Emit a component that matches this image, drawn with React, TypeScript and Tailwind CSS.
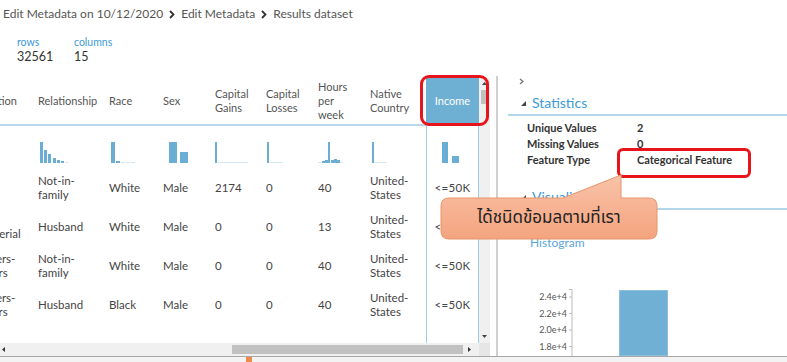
import React from 'react'

interface Col {
    key: string
    w: string
    left: number
    head: string[]
}

const cols: Col[] = [
    { key: 'occ', w: 'w-[38px]', left: 0, head: ['Occupation'] },
    { key: 'rel', w: 'w-[71px]', left: 38, head: ['Relationship'] },
    { key: 'race', w: 'w-[54px]', left: 109, head: ['Race'] },
    { key: 'sex', w: 'w-[52px]', left: 163, head: ['Sex'] },
    { key: 'gains', w: 'w-[51px]', left: 215, head: ['Capital', 'Gains'] },
    { key: 'loss', w: 'w-[52px]', left: 266, head: ['Capital', 'Losses'] },
    { key: 'hours', w: 'w-[52px]', left: 318, head: ['Hours', 'per', 'week'] },
    { key: 'native', w: 'w-[56px]', left: 370, head: ['Native', 'Country'] },
]

// [x, width, height] in page coordinates
const bars: Record<string, number[][]> = {
    occ: [],
    rel: [
        [40, 3, 21],
        [44, 3, 13],
        [48, 3, 9],
        [53, 3, 5],
        [57, 3, 3],
        [61, 3, 2],
        [65, 3, 1],
    ],
    race: [
        [111, 4, 21],
        [116, 4, 2],
        [121, 4, 1],
        [126, 4, 1],
        [131, 4, 1],
    ],
    sex: [
        [169, 8, 21],
        [180, 8, 11],
    ],
    gains: [
        [215, 2, 21],
        [218, 30, 1],
    ],
    loss: [
        [267, 2, 21],
        [270, 13, 1],
    ],
    hours: [
        [318, 3, 1],
        [322, 3, 2],
        [325, 3, 3],
        [328, 2, 21],
        [331, 3, 3],
        [334, 3, 4],
        [337, 3, 3],
        [340, 3, 1],
    ],
    native: [
        [372, 2, 21],
        [375, 12, 1],
    ],
    income: [
        [442, 6, 21],
        [452, 7, 7],
    ],
}

type Row = Record<string, string[]>

const rows: Row[] = [
    { occ: [], rel: ['Not-in-', 'family'], race: ['White'], sex: ['Male'], gains: ['2174'], loss: ['0'], hours: ['40'], native: ['United-', 'States'], income: ['<=50K'] },
    { occ: ['Exec-', 'managerial'], rel: ['Husband'], race: ['White'], sex: ['Male'], gains: ['0'], loss: ['0'], hours: ['13'], native: ['United-', 'States'], income: ['<=50K'] },
    { occ: ['Handlers-', 'cleaners'], rel: ['Not-in-', 'family'], race: ['White'], sex: ['Male'], gains: ['0'], loss: ['0'], hours: ['40'], native: ['United-', 'States'], income: ['<=50K'] },
    { occ: ['Handlers-', 'cleaners'], rel: ['Husband'], race: ['Black'], sex: ['Male'], gains: ['0'], loss: ['0'], hours: ['40'], native: ['United-', 'States'], income: ['<=50K'] },
]

const widths: Record<string, number> = { occ: 38, rel: 71, race: 54, sex: 52, gains: 51, loss: 52, hours: 52, native: 56 }

const Chevron = () => (
    <svg width="6" height="9" viewBox="0 0 6 9" className="mt-[1px]">
        <path d="M1 1 L4.5 4.5 L1 8" fill="none" stroke="#333" strokeWidth="1.8" />
    </svg>
)

const Hist = ({ k, left, width }: { k: string; left: number; width: number }) => (
    <svg width={width} height="42" className="block">
        {bars[k].map(([x, w, h], i) => (
            <rect key={i} x={x - left} y={37 - h} width={w} height={h} fill={h > 1 ? '#6aaed6' : '#d2e6f2'} />
        ))}
    </svg>
)

function Table() {
    return (
        <div className="flex w-[479px] flex-col">
            <div className="mt-[2px] flex h-[48px] border-b-2 border-[#b9d9ea] text-[11px] leading-[14px] text-[#555]">
                {cols.map((c) => (
                    <div key={c.key} className={`${c.w} flex items-center overflow-hidden`}>
                        {c.key === 'occ' ? (
                            <div className="ml-[-39px] shrink-0">Occupation</div>
                        ) : (
                            <div>
                                {c.head.map((l) => (
                                    <div key={l}>{l}</div>
                                ))}
                            </div>
                        )}
                    </div>
                ))}
                <div className="flex w-[53px] items-center justify-center bg-[#6eb0d4] text-white">Income</div>
            </div>

            <div className="flex h-[42px]">
                {cols.map((c) => (
                    <div key={c.key} className={c.w}>
                        <Hist k={c.key} left={c.left} width={widths[c.key]} />
                    </div>
                ))}
                <div className="w-[53px] border-x border-[#a3cfe5]">
                    <Hist k="income" left={427} width={51} />
                </div>
            </div>

            {rows.map((r, i) => (
                <div key={i} className="flex h-[39px] text-[11.5px] leading-[14px] text-[#444]">
                    {cols.map((c) => (
                        <div key={c.key} className={`${c.w} flex items-center overflow-hidden`}>
                            {c.key === 'occ' ? (
                                <div className="ml-[-34px] w-[80px] shrink-0">
                                    {r.occ.map((l) => (
                                        <div key={l}>{l}</div>
                                    ))}
                                </div>
                            ) : (
                                <div>
                                    {r[c.key].map((l) => (
                                        <div key={l}>{l}</div>
                                    ))}
                                </div>
                            )}
                        </div>
                    ))}
                    <div className="flex w-[53px] items-center justify-center border-x border-[#a3cfe5] tracking-[0.3px]">{r.income[0]}</div>
                </div>
            ))}

            <div className="flex flex-1">
                <div className="w-[426px]" />
                <div className="w-[53px] border-x border-[#a3cfe5]" />
            </div>
        </div>
    )
}

function LeftPanel() {
    return (
        <div className="flex w-[490px] flex-col">
            <div className="flex h-[267px]">
                <Table />
                <div className="mt-[2px] flex w-[11px] flex-col items-center bg-[#f0f0f0]">
                    <svg width="7" height="5" className="mt-[3px]">
                        <polygon points="3.5,1 6,4 1,4" fill="#444" />
                    </svg>
                    <div className="mt-[4px] h-[14px] w-[8px] bg-[#c1c1c1]" />
                    <div className="flex-1" />
                    <svg width="7" height="5" className="mb-[4px]">
                        <polygon points="1,1 6,1 3.5,4" fill="#444" />
                    </svg>
                </div>
            </div>
            <div className="flex h-[13px]">
                <div className="flex w-[479px] items-center bg-[#f0f0f0]">
                    <svg width="5" height="7" className="ml-[1px]">
                        <polygon points="4,1 4,6 1,3.5" fill="#333" />
                    </svg>
                    <div className="w-[226px]" />
                    <div className="h-[9px] w-[231px] bg-[#c1c1c1]" />
                    <div className="flex-1" />
                    <svg width="5" height="7" className="mr-[7px]">
                        <polygon points="1,1 4,3.5 1,6" fill="#333" />
                    </svg>
                </div>
                <div className="w-[11px] bg-[#e6e6e6]" />
            </div>
        </div>
    )
}

const SectionHead = ({ title }: { title: string }) => (
    <div className="flex h-[26px] items-center border-b-2 border-[#b3d6ea]">
        <svg width="5" height="5" className="ml-[13px] mt-[2px]">
            <polygon points="5,0 5,5 0,5" fill="#444" />
        </svg>
        <span className="ml-[6px] text-[14px] text-[#3c9ad8]">{title}</span>
    </div>
)

function RightPanel() {
    return (
        <div className="h-[280px] flex-1 overflow-hidden pl-[10px]">
            <div className="flex h-[10px] items-center pl-[11px]">
                <svg width="5" height="7">
                    <path d="M1 1 L4 3.5 L1 6" fill="none" stroke="#777" strokeWidth="1.3" />
                </svg>
            </div>
            <div className="mt-[4px]">
                <SectionHead title="Statistics" />
            </div>
            <div className="mt-[4px] pl-[19px] text-[11px] font-bold leading-[16px] text-[#333]">
                <div className="flex">
                    <span className="w-[110px]">Unique Values</span>
                    <span>2</span>
                </div>
                <div className="flex">
                    <span className="w-[110px]">Missing Values</span>
                    <span>0</span>
                </div>
                <div className="flex">
                    <span className="w-[110px]">Feature Type</span>
                    <span>Categorical Feature</span>
                </div>
            </div>
            <div className="mt-[16px]">
                <SectionHead title="Visualizations" />
            </div>
            <div className="mt-[25px] pl-[22px] text-[12px] leading-[16px] text-[#5aa5d8]">Histogram</div>
            <div className="mt-[38px] flex h-[67px]">
                <div className="w-[59px] text-right text-[9px] leading-[16.5px] text-[#555]">
                    <div>2.4e+4</div>
                    <div>2.2e+4</div>
                    <div>2.0e+4</div>
                    <div>1.8e+4</div>
                </div>
                <svg width="6" height="67" className="block">
                    <line x1="5" y1="0" x2="5" y2="67" stroke="#bbb" strokeWidth="1" />
                    <line x1="2" y1="0.5" x2="5" y2="0.5" stroke="#bbb" />
                    {[8, 24.5, 41, 57.5].map((y) => (
                        <line key={y} x1="2" y1={y} x2="5" y2={y} stroke="#bbb" />
                    ))}
                </svg>
                <div className="ml-[46px] mt-[1px] h-[66px] w-[49px] border border-[#8cc0de] bg-[#71b0d5]" />
            </div>
        </div>
    )
}

export default function App() {
    return (
        <div className="relative h-[362px] w-[787px] overflow-hidden bg-white font-['Lato',sans-serif]">
            <div className="h-[76px]">
                <div className="flex h-[28px] items-center gap-[6px] pl-[3px] text-[12px] text-[#555]">
                    <span>Edit Metadata on 10/12/2020</span>
                    <Chevron />
                    <span>Edit Metadata</span>
                    <Chevron />
                    <span>Results dataset</span>
                </div>
                <div className="mt-[7px] flex pl-[17px]">
                    <div className="w-[57px]">
                        <div className="text-[10.5px] leading-[14px] text-[#3c9ad8]">rows</div>
                        <div className="text-[12.5px] leading-[16px] text-[#333]">32561</div>
                    </div>
                    <div>
                        <div className="text-[10.5px] leading-[14px] text-[#3c9ad8]">columns</div>
                        <div className="text-[12.5px] leading-[16px] text-[#333]">15</div>
                    </div>
                </div>
            </div>

            <div className="flex h-[280px]">
                <LeftPanel />
                <div className="w-[6px]" />
                <div className="w-[2px] bg-[#d0d0d0]" />
                <RightPanel />
            </div>
            <div className="relative h-[6px] border-t border-[#a6a6a6] bg-[#f3f3f3]">
                <div className="absolute left-[246px] top-0 h-[5px] w-[6px] bg-[#f08a4b]" />
            </div>

            {/* highlights */}
            <div className="absolute left-[420px] top-[75px] h-[51px] w-[69px] rounded-[9px] border-[3px] border-[#e8141b]" />
            <div className="absolute left-[617px] top-[148px] h-[30px] w-[134px] rounded-[6px] border-[3px] border-[#e8141b]" />

            {/* callout */}
            <svg width="220" height="70" className="absolute left-[440px] top-[172px]">
                <defs>
                    <linearGradient id="callout" x1="0" y1="0" x2="0" y2="1">
                        <stop offset="0" stopColor="#f9c3a8" />
                        <stop offset="1" stopColor="#f4a47f" />
                    </linearGradient>
                </defs>
                <path
                    d="M9,26 H123 L181,3 V26 H209 Q217,26 217,34 V59 Q217,67 209,67 H9 Q1,67 1,59 V34 Q1,26 9,26 Z"
                    fill="url(#callout)"
                    stroke="#e9936a"
                    strokeWidth="1"
                />
            </svg>
            <div className="absolute left-[441px] top-[198px] flex h-[41px] w-[216px] items-center justify-center font-['Noto_Sans_Thai','Tahoma',sans-serif] text-[17px] text-[#222]">
                ได้ชนิดข้อมลตามที่เรา
            </div>
        </div>
    )
}
